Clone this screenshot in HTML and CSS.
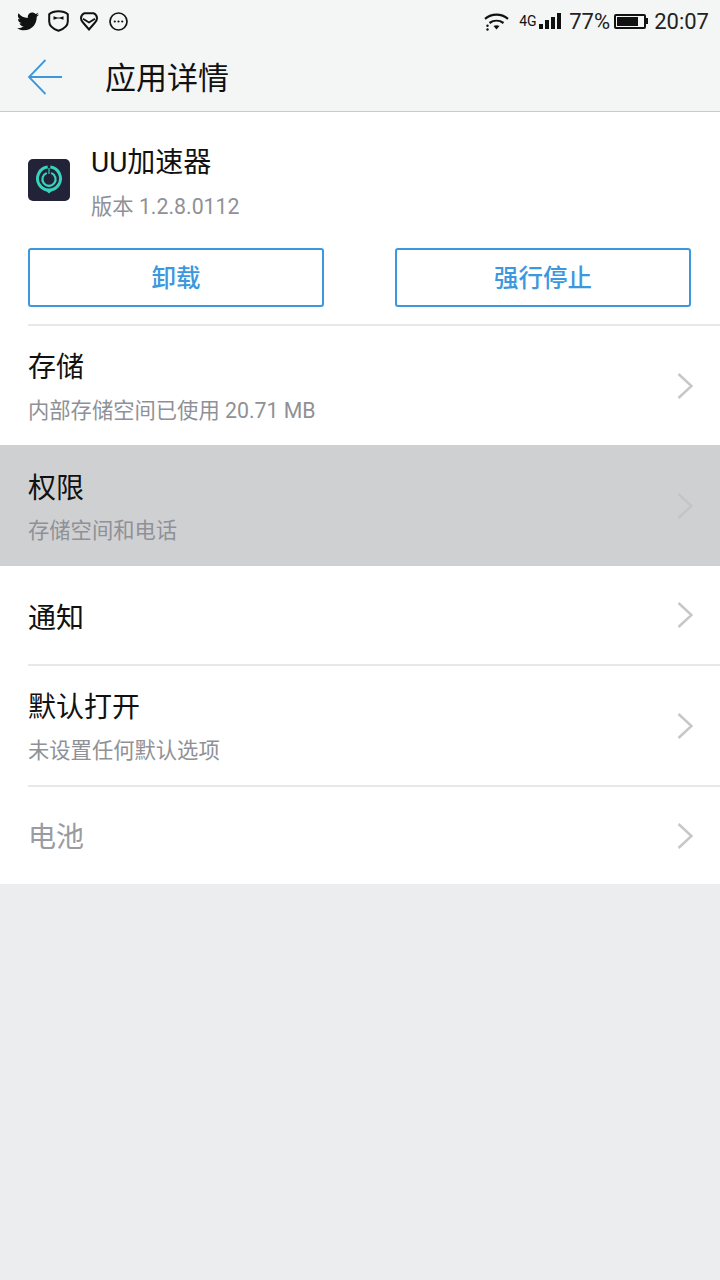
FILE: index.html
```html
<!DOCTYPE html>
<html lang="zh-CN">
<head>
  <meta charset="UTF-8">
  <title>应用详情</title>
  <link rel="stylesheet" href="styles.css">
</head>
<body>
<div class="statusbar">
  <div class="status-left">
    <svg class="ic-bird" width="22" height="19" viewBox="0 0 24 20"><path fill="#111" d="M24 2.400c-.9.400-1.800.700-2.800.8 1-.6 1.800-1.600 2.100-2.700-.9.600-2 1-3.100 1.200C19.300.700 18 .1 16.600.1c-2.700 0-4.900 2.200-4.900 4.900 0 .4 0 .8.100 1.100C7.700 5.900 4.100 4 1.700.9c-.4.700-.7 1.600-.7 2.500 0 1.700.9 3.200 2.200 4.100-.8 0-1.600-.2-2.200-.6v.1c0 2.400 1.700 4.400 3.900 4.800-.4.100-.8.200-1.300.2-.3 0-.6 0-.9-.1.600 2 2.400 3.400 4.600 3.400-1.700 1.300-3.800 2.100-6.100 2.100-.4 0-.8 0-1.200-.1 2.200 1.400 4.800 2.200 7.500 2.200 9.100 0 14-7.500 14-14v-.6c1-.7 1.800-1.600 2.500-2.500z"/></svg>
    <svg class="ic-shield" width="21" height="22" viewBox="0 0 21 22"><path fill="none" stroke="#111" stroke-width="2" d="M1.200 4.200C3.500 2.200 6.800 1.200 10.500 1.200s7 1 9.300 3v7.300c0 4.300-4 7.500-9.300 9.300-5.300-1.800-9.300-5-9.300-9.300z"/><path fill="#111" d="M5.500 6.200l3.800 1.200h2.400l3.800-1.200v3.600l-3.800-1.200H9.300L5.500 9.800z"/></svg>
    <svg class="ic-gem" width="18" height="19" viewBox="0 0 18 19"><path fill="none" stroke="#111" stroke-width="2" d="M4.500 1.200h9c2.200 1 3.500 2.800 3.500 5 0 1.800-.8 3.300-2.200 4.600L9 17.500 3.200 10.800C1.800 9.500 1 8 1 6.200c0-2.200 1.300-4 3.500-5z"/><path fill="none" stroke="#111" stroke-width="1.800" d="M3 6.800L9 10.500l6-3.700"/></svg>
    <svg class="ic-more" width="19" height="19" viewBox="0 0 19 19"><circle cx="9.500" cy="9.500" r="8.500" fill="none" stroke="#111" stroke-width="1.700"/><circle cx="5.800" cy="9.500" r="1.100" fill="#111"/><circle cx="9.500" cy="9.500" r="1.100" fill="#111"/><circle cx="13.200" cy="9.500" r="1.100" fill="#111"/></svg>
  </div>
  <div class="status-right">
    <svg width="25" height="19" viewBox="0 0 25 19"><path fill="none" stroke="#111" stroke-width="2.200" d="M1 6.800c6.800-5.600 16.200-5.600 23 0M5.500 11c4.200-3 9.800-3 14 0"/><path fill="#111" d="M9.500 14c1.800-1 4.200-1 6 0l-3 3.400z"/><circle cx="3.500" cy="13.800" r="1.200" fill="#111"/><circle cx="3.500" cy="17.500" r="1.200" fill="#111"/></svg>
    <span class="net">4G</span>
    <div class="signal"><i class="s1"></i><i class="s2"></i><i class="s3"></i><i class="s4"></i></div>
    <span class="pct">77%</span>
    <div class="battery"><div class="battery-fill"></div></div>
    <div class="battery-tip"></div>
    <span class="clock">20:07</span>
  </div>
</div>

<div class="titlebar">
  <svg class="back" width="36" height="36" viewBox="0 0 36 36"><path fill="none" stroke="#3b98de" stroke-width="1.800" d="M35 18H2M18.500 1L2 18l16.500 17"/></svg>
  <h1>应用详情</h1>
</div>

<div class="panel">
  <div class="app-head">
    <div class="app-icon">
      <svg width="42" height="42" viewBox="0 0 42 42"><rect width="42" height="42" rx="5" fill="#222338"/><path fill="none" stroke="#37d3bb" stroke-width="3" d="M19.700 8.100a11.500 11.500 0 1 0 2.600 0"/><path fill="none" stroke="#37d3bb" stroke-width="2.200" d="M18.800 14a6.600 6.600 0 1 0 4.400 0"/><path stroke="#37d3bb" stroke-width="1.200" d="M21 9v6"/><path fill="#37d3bb" d="M17 31h8l-4 3.500z"/></svg>
    </div>
    <div class="app-text">
      <div class="app-name">UU加速器</div>
      <div class="app-ver">版本 1.2.8.0112</div>
    </div>
  </div>
  <div class="actions">
    <div class="btn">卸载</div>
    <div class="btn">强行停止</div>
  </div>

  <div class="row two">
    <div class="row-text"><div class="row-title">存储</div><div class="row-sub">内部存储空间已使用 20.71 MB</div></div>
    <svg class="chev" width="16" height="26" viewBox="0 0 16 26"><path d="M1.500 1l13 12-13 12"/></svg>
  </div>
  <div class="row two pressed">
    <div class="row-text"><div class="row-title">权限</div><div class="row-sub">存储空间和电话</div></div>
    <svg class="chev" width="16" height="26" viewBox="0 0 16 26"><path d="M1.500 1l13 12-13 12"/></svg>
  </div>
  <div class="row one no-line">
    <div class="row-text"><div class="row-title">通知</div></div>
    <svg class="chev" width="16" height="26" viewBox="0 0 16 26"><path d="M1.500 1l13 12-13 12"/></svg>
  </div>
  <div class="row two">
    <div class="row-text"><div class="row-title">默认打开</div><div class="row-sub">未设置任何默认选项</div></div>
    <svg class="chev" width="16" height="26" viewBox="0 0 16 26"><path d="M1.500 1l13 12-13 12"/></svg>
  </div>
  <div class="row one last">
    <div class="row-text"><div class="row-title off">电池</div></div>
    <svg class="chev" width="16" height="26" viewBox="0 0 16 26"><path d="M1.500 1l13 12-13 12"/></svg>
  </div>
</div>
</body>
</html>
```

FILE: styles.css
```css
body {
  font-family: 'Roboto', 'Noto Sans CJK SC', sans-serif;
  background: #ecedef;
  margin: 0;
  padding: 0;
}
.statusbar {
  height: 42px;
  background: #f4f6f6;
  display: flex;
  justify-content: space-between;
  align-items: center;
  padding: 0 11px 0 17px;
  color: #111;
}
.status-left, .status-right {
  display: flex;
  align-items: center;
}
.ic-shield { margin-left: 9px; }
.ic-gem, .ic-more { margin-left: 11px; }
.net { font-size: 14px; margin-left: 10px; width: 19px; }
.signal {
  display: flex;
  align-items: flex-end;
  gap: 2px;
  height: 16px;
  margin-left: 1px;
}
.signal i { display: block; width: 4px; background: #111; }
.signal .s1 { height: 5px; }
.signal .s2 { height: 9px; }
.signal .s3 { height: 12px; }
.signal .s4 { height: 16px; }
.pct, .clock { font-size: 22px; color: #222; }
.pct { margin-left: 8px; width: 40px; white-space: nowrap; }
.clock { margin-left: 6px; }
.battery {
  width: 32px;
  height: 15px;
  box-sizing: border-box;
  border: 2px solid #111;
  border-radius: 2px;
  margin-left: 5px;
  padding: 1px;
}
.battery-fill { width: 21px; height: 9px; background: #111; }
.battery-tip { width: 2px; height: 6px; background: #111; }
.titlebar {
  height: 69px;
  background: #f4f6f6;
  border-bottom: 1px solid #c8c9cb;
  display: flex;
  align-items: center;
  padding-left: 27px;
}
.titlebar h1 {
  font-size: 31px;
  font-weight: 400;
  color: #111;
  margin: 0 0 2px 42px;
}
.panel { background: #fff; }
.app-head {
  height: 136px;
  box-sizing: border-box;
  display: flex;
  align-items: center;
  gap: 21px;
  padding: 0 28px;
}
.app-icon { height: 42px; }
.app-text { padding-top: 8px; }
.app-name { font-size: 28px; color: #111; line-height: 36px; }
.app-ver { font-size: 21.300px; color: #8f9197; line-height: 32px; margin-top: 10px; }
.actions {
  display: flex;
  justify-content: space-between;
  padding: 0 29px 17px 28px;
}
.btn {
  width: 296px;
  height: 59px;
  box-sizing: border-box;
  border: 2px solid #3b98de;
  border-radius: 3px;
  color: #3b98de;
  font-size: 24.500px;
  font-weight: 500;
  padding-bottom: 2px;
  display: flex;
  align-items: center;
  justify-content: center;
}
.row {
  margin-left: 28px;
  padding-right: 27px;
  display: flex;
  justify-content: space-between;
  align-items: center;
  box-sizing: border-box;
  border-top: 2px solid #e8e8ea;
}
.row.two { height: 121px; }
.row.one { height: 98px; }
.row.last { height: 99px; }
.row.pressed {
  margin-left: 0;
  padding-left: 28px;
  background: #cfd0d2;
  border-top: none;
}
.row.no-line { border-top: none; }
.row-text { padding-top: 4px; }
.pressed .row-text { padding-top: 5px; }
.no-line .row-text { padding-top: 8px; }
.row-title { font-size: 28px; color: #111; line-height: 40px; }
.row-title.off { color: #999ca1; }
.row-sub { font-size: 21.300px; color: #8f9197; line-height: 32px; margin-top: 7px; }
.pressed .row-sub { margin-top: 6px; }
.chev { fill: none; stroke: #c6c7c9; stroke-width: 2.500; }
.pressed .chev { stroke: #c4c5c7; }
```
